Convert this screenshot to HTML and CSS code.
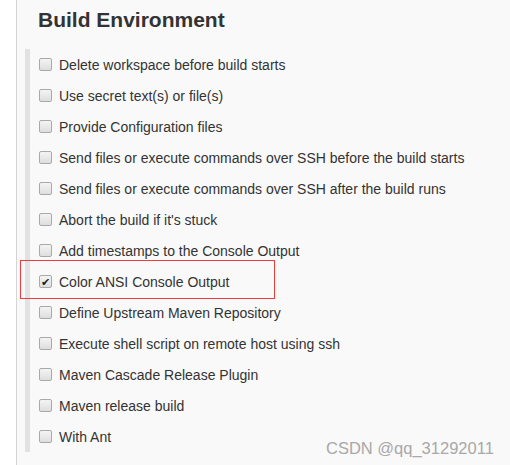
FILE: index.html
```html
<!DOCTYPE html>
<html>
<head>
    <title>Build Environment</title>
    <link rel="stylesheet" href="styles.css">
</head>
<body>
    <div class="section">
        <h2 class="section-title">Build Environment</h2>

        <ul class="options">
            <li><label><input type="checkbox"> Delete workspace before build starts</label></li>
            <li><label><input type="checkbox"> Use secret text(s) or file(s)</label></li>
            <li><label><input type="checkbox"> Provide Configuration files</label></li>
            <li><label><input type="checkbox"> Send files or execute commands over SSH before the build starts</label></li>
            <li><label><input type="checkbox"> Send files or execute commands over SSH after the build runs</label></li>
            <li><label><input type="checkbox"> Abort the build if it's stuck</label></li>
            <li><label><input type="checkbox"> Add timestamps to the Console Output</label></li>
            <li class="marked">
                <label><input type="checkbox" checked> Color ANSI Console Output</label>
                <span class="highlight"></span>
            </li>
            <li><label><input type="checkbox"> Define Upstream Maven Repository</label></li>
            <li><label><input type="checkbox"> Execute shell script on remote host using ssh</label></li>
            <li><label><input type="checkbox"> Maven Cascade Release Plugin</label></li>
            <li><label><input type="checkbox"> Maven release build</label></li>
            <li><label><input type="checkbox"> With Ant</label></li>
        </ul>

        <span class="watermark">CSDN @qq_31292011</span>
    </div>
</body>
</html>
```

FILE: styles.css
```css
body {
    font-family: "Liberation Sans", Arial, sans-serif;
    margin: 0;
    padding: 0;
    background-color: #ffffff;
    color: #333333;
}

.section {
    position: relative;
    margin-left: 16px;
    min-height: 465px;
    border-left: 1px solid #d4d4d4;
    background-color: #f9f9f9;
    overflow: hidden;
}

.section-title {
    margin: 0;
    padding: 7px 0 0 21px;
    font-size: 21px;
    line-height: 25px;
    font-weight: bold;
    color: #333333;
}

.options {
    list-style: none;
    margin: 17px 0 0 8px;
    padding: 0;
    border-left: 5px solid #e2e2e2;
}

.options li {
    position: relative;
    height: 31px;
    display: flex;
    align-items: center;
    padding-left: 9px;
}

.options label {
    display: flex;
    align-items: center;
    gap: 7px;
    font-size: 14px;
    color: #333333;
    white-space: nowrap;
}

.options input {
    appearance: none;
    -webkit-appearance: none;
    margin: 0;
    width: 13px;
    height: 13px;
    border: 1px solid #a9a9a9;
    border-radius: 2px;
    background: linear-gradient(#f4f4f4, #dedede);
    display: flex;
    align-items: center;
    justify-content: center;
}

.options input:checked::after {
    content: "\2714";
    font-size: 11px;
    line-height: 10px;
    color: #1e1e1e;
}

.highlight {
    position: absolute;
    left: -10px;
    top: -6px;
    width: 253px;
    height: 37px;
    border: 1px solid #ee3b3b;
}

.watermark {
    position: absolute;
    left: 309px;
    top: 439px;
    font-size: 16.5px;
    color: #a8a8a8;
    white-space: nowrap;
}
```
